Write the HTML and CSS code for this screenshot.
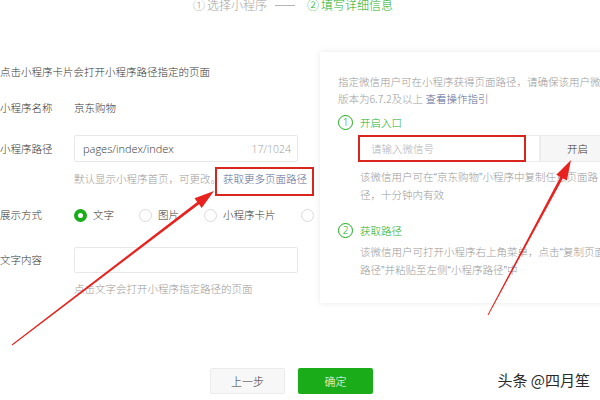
FILE: index.html
```html
<!DOCTYPE html>
<html lang="zh-CN">
<head>
<meta charset="utf-8">
<title>填写详细信息</title>
<link rel="stylesheet" href="styles.css">
</head>
<body>
<div class="page">
  <div class="steps">
    <span class="step done"><span class="num">①</span>选择小程序</span>
    <span class="step-line"></span>
    <span class="step active"><span class="num">②</span>填写详细信息</span>
  </div>

  <div class="main">
    <div class="form">
      <div class="intro">点击小程序卡片会打开小程序路径指定的页面</div>
      <div class="row row-name">
        <div class="label">小程序名称</div>
        <div class="value">京东购物</div>
      </div>
      <div class="row row-path">
        <div class="label">小程序路径</div>
        <div class="input">
          <span class="input-text">pages/index/index</span>
          <span class="counter">17/1024</span>
        </div>
      </div>
      <div class="row hint-row">
        <div class="label"></div>
        <div class="hint">默认显示小程序首页，可更改。<span class="link link-path">获取更多页面路径<span class="mark mark-path"></span></span></div>
      </div>
      <div class="row row-radio">
        <div class="label">展示方式</div>
        <div class="radios">
          <span class="radio-item"><span class="radio checked"></span>文字</span>
          <span class="radio-item"><span class="radio"></span>图片</span>
          <span class="radio-item"><span class="radio"></span>小程序卡片</span>
          <span class="radio-item"><span class="radio"></span></span>
        </div>
      </div>
      <div class="row row-content">
        <div class="label">文字内容</div>
        <div class="input"></div>
      </div>
      <div class="row hint-row2">
        <div class="label"></div>
        <div class="hint">点击文字会打开小程序指定路径的页面</div>
      </div>
    </div>

    <div class="panel">
      <div class="panel-desc">指定微信用户可在小程序获得页面路径，请确保该用户微<br>版本为6.7.2及以上 <span class="link">查看操作指引</span></div>
      <div class="panel-step step1"><span class="circle">1</span>开启入口</div>
      <div class="open-row">
        <div class="wx-input">请输入微信号<span class="mark mark-input"></span></div>
        <div class="open-btn">开启</div>
      </div>
      <div class="panel-text text1">该微信用户可在<span class="q">“</span>京东购物<span class="q">”</span>小程序中复制任意页面路<br>径，十分钟内有效</div>
      <div class="panel-step step2"><span class="circle">2</span>获取路径</div>
      <div class="panel-text text2">该微信用户可打开小程序右上角菜单，点击<span class="q">“</span>复制页面<br>路径<span class="q">”</span>并粘贴至左侧<span class="q">“</span>小程序路径<span class="q">”</span>中</div>
    </div>
  </div>

  <div class="actions">
    <div class="btn btn-default">上一步</div>
    <div class="btn btn-primary">确定</div>
  </div>

  <div class="watermark">头条 @四月笙</div>

  <svg class="arrows" width="600" height="400" viewBox="0 0 600 400">
    <polygon fill="#e8231f" points="12.3,348.4 199.0,207.3 201.7,210.9 214,194 194.5,201.3 197.2,204.9 11.7,347.6"/>
    <polygon fill="#e8231f" points="488.4,318.2 562.9,181.3 566.9,183.4 571,163 556.3,177.8 560.3,179.9 487.6,317.8"/>
  </svg>
</div>
</body>
</html>
```

FILE: styles.css
```css
* { box-sizing: border-box; }
html, body { margin: 0; padding: 0; }
body {
  width: 600px;
  height: 400px;
  overflow: hidden;
  background: #fff;
  font-family: "Noto Sans CJK SC", "Noto Sans", sans-serif;
  font-size: 10.5px;
  font-weight: 300;
  color: #353535;
}
.page { position: relative; width: 600px; height: 400px; }

.steps {
  display: flex;
  align-items: center;
  height: 16px;
  margin-top: -3px;
  padding-left: 193px;
  font-size: 12px;
  line-height: 16px;
}
.step { display: flex; align-items: center; }
.step .num { margin-right: 2px; }
.step.done { color: #a3a3a3; }
.step.active { color: #1aad19; }
.step-line { width: 20px; height: 1px; background: #b5b5b5; margin: 0 12px 0 8px; }

.main { display: flex; margin-top: 39px; }

.form { width: 320px; flex: none; }
.intro { padding-top: 11px; line-height: 18px; }
.row { display: flex; align-items: center; }
.label { width: 74px; flex: none; line-height: 18px; }
.value { line-height: 18px; }
.row-name { margin-top: 18px; }
.row-path { margin-top: 18px; }
.input {
  width: 224px;
  height: 27px;
  flex: none;
  border: 1px solid #e8e8e8;
  border-radius: 2px;
  display: flex;
  align-items: center;
  justify-content: space-between;
  padding: 0 6px 0 8px;
}
.input-text { font-family: "Open Sans", "Noto Sans", sans-serif; font-size: 11px; color: #353535; }
.counter { font-family: "Open Sans", "Noto Sans", sans-serif; font-size: 10.5px; color: #9a9a9a; }
.hint-row { margin-top: 8px; }
.hint { color: #9a9a9a; line-height: 18px; white-space: nowrap; }
.link { color: #576b95; }
.link-path { position: relative; margin-left: 2px; }

.mark { position: absolute; border: 2px solid #d9261c; pointer-events: none; }
.mark-path { left: -8px; right: -7px; top: -4px; bottom: -10px; }

.row-radio { margin-top: 18px; }
.radios { display: flex; flex: none; align-items: center; line-height: 18px; white-space: nowrap; }
.radio-item { display: flex; align-items: center; margin-right: 25px; }
.radio-item:last-child { margin-right: 0; }
.radio {
  width: 13px; height: 13px; border-radius: 50%;
  border: 1px solid #dadada;
  margin-right: 6px;
  background: #fff;
  flex: none;
}
.radio.checked { border: 4px solid #1aad19; }

.row-content { margin-top: 23px; }
.row-content .input { height: 26px; }
.hint-row2 { margin-top: 7px; }

.panel {
  width: 300px;
  height: 251px;
  flex: none;
  background: #fff;
  box-shadow: 0 0 6px rgba(0,0,0,0.09);
  padding-left: 18px;
  color: #9a9a9a;
}
.panel-desc { padding-top: 21px; line-height: 17px; white-space: nowrap; }
.panel-step {
  display: flex; align-items: center;
  height: 16px;
  color: #1aad19;
}
.step1 { margin-top: 7px; }
.step2 { margin-top: 18px; }
.circle {
  width: 15px; height: 15px; border-radius: 50%;
  border: 1px solid #1aad19;
  display: flex; align-items: center; justify-content: center;
  font-family: "Noto Sans", sans-serif;
  font-size: 10px;
  margin-right: 7px;
}
.open-row { display: flex; margin-top: 5px; margin-left: 20px; height: 27px; }
.wx-input {
  position: relative;
  width: 182px;
  height: 27px;
  border: 1px solid #ececec;
  display: flex; align-items: center;
  padding-left: 12px;
  color: #b2b2b2;
}
.mark-input { left: -1px; top: -1px; width: 168px; bottom: -1px; }
.open-btn {
  width: 75px; height: 27px;
  background: #f6f6f6;
  border: 1px solid #ececec;
  display: flex; align-items: center; justify-content: center;
  color: #353535;
}
.panel-text { margin-left: 22px; white-space: nowrap; }
.q { font-family: "Liberation Sans", sans-serif; }
.text1 { margin-top: 6px; line-height: 18px; }
.text2 { margin-top: 5px; line-height: 17px; }

.actions { display: flex; margin-top: 65px; padding-left: 210px; }
.btn {
  width: 75px; height: 26px;
  border-radius: 2px;
  display: flex; align-items: center; justify-content: center;
  font-size: 11px;
}
.btn-default { background: #f7f7f7; border: 1px solid #ebebeb; color: #353535; }
.btn-primary { background: #1aad19; color: #fff; margin-left: 13px; }

.watermark {
  position: absolute;
  right: 10px;
  top: 373px;
  font-size: 15px;
  line-height: 20px;
  font-weight: 400;
  color: #2a2a2a;
  text-shadow: 0 0 2px #fff;
}
.arrows { position: absolute; left: 0; top: 0; pointer-events: none; }
```
